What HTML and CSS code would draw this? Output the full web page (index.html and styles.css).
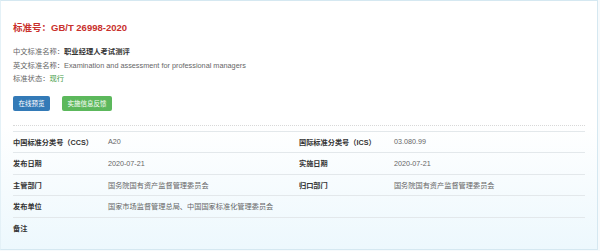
FILE: index.html
```html
<!DOCTYPE html>
<html lang="zh-CN">
<head>
    <meta charset="UTF-8">
    <title>GB/T 26998-2020</title>
    <meta name="viewport" content="width=device-width, initial-scale=1.0">
    <link rel="stylesheet" href="styles.css">
</head>
<body>
    <div class="panel">
        <h1 class="std-title">标准号：GB/T 26998-2020</h1>
        <div class="std-info">
            <div class="info-line">中文标准名称：<strong>职业经理人考试测评</strong></div>
            <div class="info-line">英文标准名称：Examination and assessment for professional managers</div>
            <div class="info-line">标准状态：<span class="status">现行</span></div>
        </div>
        <div class="actions">
            <button class="btn btn-blue">在线预览</button>
            <button class="btn btn-green">实施信息反馈</button>
        </div>
        <div class="divider"></div>
        <table class="detail-table">
            <colgroup>
                <col class="col-label">
                <col class="col-value">
                <col class="col-label">
                <col class="col-value">
            </colgroup>
            <tr>
                <th>中国标准分类号（CCS）</th>
                <td>A20</td>
                <th>国际标准分类号（ICS）</th>
                <td>03.080.99</td>
            </tr>
            <tr>
                <th>发布日期</th>
                <td>2020-07-21</td>
                <th>实施日期</th>
                <td>2020-07-21</td>
            </tr>
            <tr>
                <th>主管部门</th>
                <td>国务院国有资产监督管理委员会</td>
                <th>归口部门</th>
                <td>国务院国有资产监督管理委员会</td>
            </tr>
            <tr>
                <th>发布单位</th>
                <td colspan="3">国家市场监督管理总局、中国国家标准化管理委员会</td>
            </tr>
            <tr>
                <th>备注</th>
                <td colspan="3"></td>
            </tr>
        </table>
    </div>
</body>
</html>
```

FILE: styles.css
```css
body {
    margin: 0;
    font-family: "Liberation Sans", "Noto Sans CJK SC", sans-serif;
    background: #f7fafc;
    color: #555;
}
.panel {
    width: 572px;
    height: 248px;
    padding: 0 12px;
    border: 1px solid #d5e8f1;
    border-left-color: #e4f1f7;
    background: linear-gradient(to bottom, #fff 50%, #edf8fd 100%);
}
.std-title {
    margin: 0;
    padding-top: 20px;
    font-size: 9.5px;
    line-height: 14px;
    font-weight: bold;
    color: #c9302c;
}
.std-info {
    margin-top: 10px;
    font-size: 7.3px;
    line-height: 13.5px;
    color: #666;
}
.info-line strong { color: #333; }
.status { color: #3c9a3c; }
.actions {
    margin-top: 10px;
    display: flex;
    gap: 12px;
}
.btn {
    height: 15px;
    padding: 0 5.5px;
    border: none;
    border-radius: 2px;
    font-family: inherit;
    font-size: 6.5px;
    color: #fff;
    cursor: pointer;
}
.btn-blue { background: #337ab7; }
.btn-green { background: #5cb85c; }
.divider {
    margin-top: 14px;
    border-top: 1px dotted #d8d8d8;
}
.detail-table {
    margin-top: 5px;
    width: 100%;
    border-collapse: collapse;
    table-layout: fixed;
    font-size: 7.2px;
}
.col-label { width: 16.6%; }
.col-value { width: 33.4%; }
.detail-table th, .detail-table td {
    height: 20.5px;
    padding: 0;
    border-top: 1px solid #e3e8eb;
    text-align: left;
    vertical-align: middle;
}
.detail-table th {
    font-weight: bold;
    color: #333;
}
.detail-table td { color: #666; }
```
